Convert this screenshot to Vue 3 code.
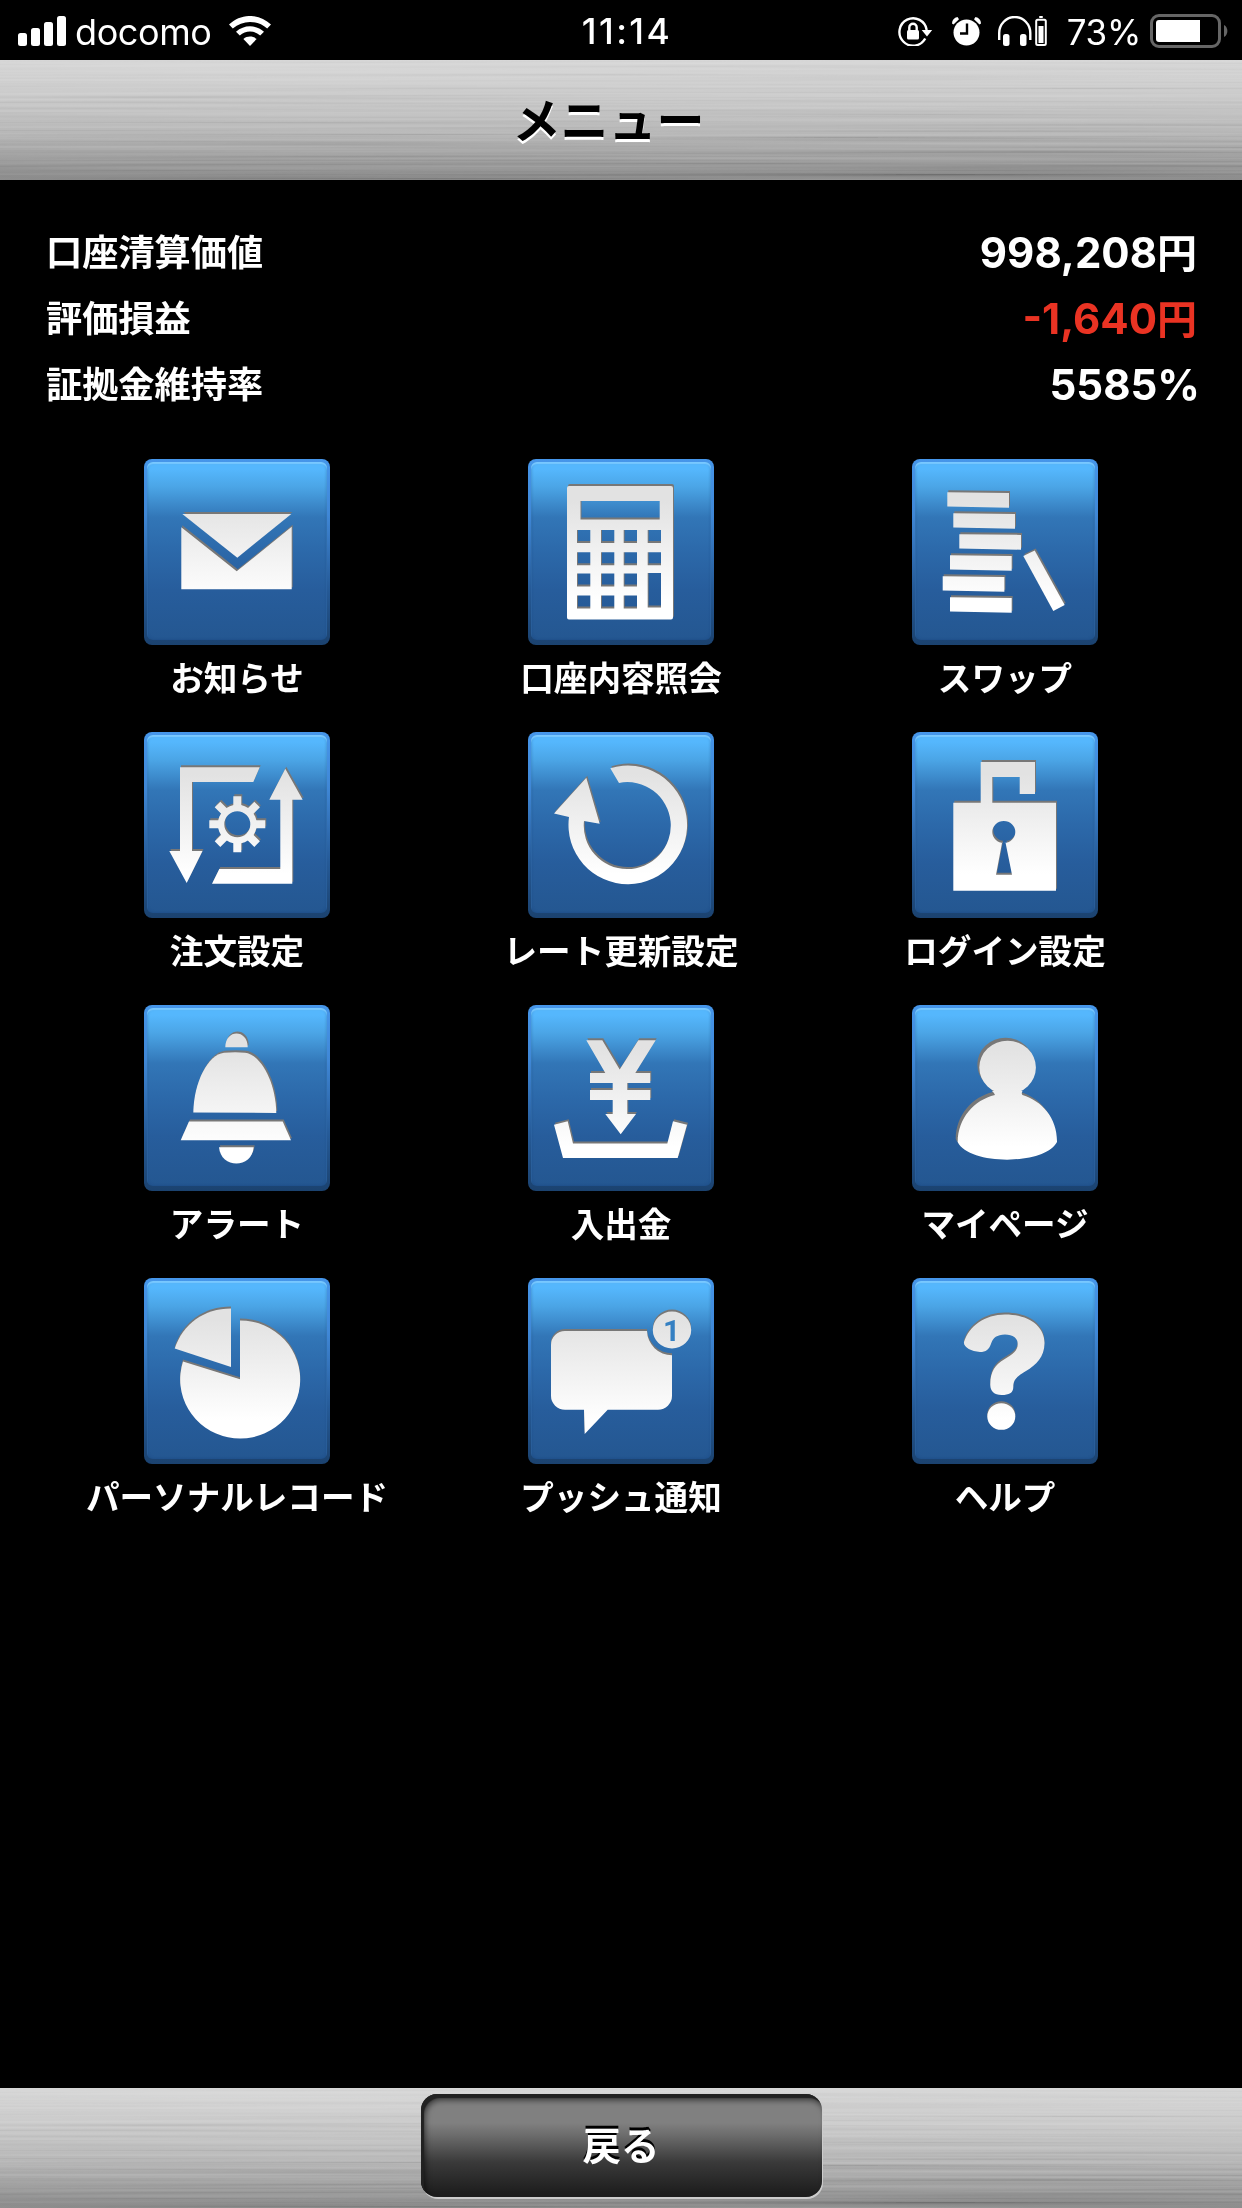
<template>
  <div class="screen">
    <svg class="defs" width="0" height="0">
      <defs>
        <linearGradient id="face" gradientUnits="userSpaceOnUse" x1="0" y1="42" x2="0" y2="142">
          <stop offset="0" stop-color="#e2e2e2" />
          <stop offset="1" stop-color="#ffffff" />
        </linearGradient>
        <filter id="brushed" x="0" y="0" width="100%" height="100%">
          <feTurbulence type="fractalNoise" baseFrequency="0.0016 0.36" numOctaves="2" seed="7" />
          <feColorMatrix
            values="1.6 0 0 0 -0.3
                    1.6 0 0 0 -0.3
                    1.6 0 0 0 -0.3
                    0 0 0 0 1"
          />
        </filter>
      </defs>
    </svg>

    <div class="status">
      <div class="status-left">
        <svg class="signal" width="49" height="30" viewBox="0 0 49 30">
          <rect x="0" y="17" width="9" height="13" rx="2.5" />
          <rect x="13" y="12" width="9" height="18" rx="2.5" />
          <rect x="26" y="6" width="9" height="24" rx="2.5" />
          <rect x="39" y="0" width="9" height="30" rx="2.5" />
        </svg>
        <span class="carrier">docomo</span>
        <svg class="wifi" width="42" height="30" viewBox="0 0 42 30">
          <path d="M0 8.6C12-2.9 30-2.9 42 8.6L38.2 12.4C28.4 3.7 13.6 3.7 3.8 12.4Z" />
          <path d="M7 15.8C15 8.4 27 8.4 35 15.8L31.2 19.6C25.4 14.3 16.6 14.3 10.8 19.6Z" />
          <path d="M14.4 23C18.2 19.8 23.8 19.8 27.6 23L21 30Z" />
        </svg>
      </div>
      <span class="clock">11:14</span>
      <div class="status-right">
        <svg class="rotation" width="35" height="30" viewBox="0 0 35 30">
          <path class="line" d="M27.2 22.5A13.7 13.7 0 1 1 28.7 14" />
          <path d="M23.7 14H34.2L29 20.5Z" />
          <rect x="9" y="14" width="12" height="9.5" rx="1.5" />
          <path class="line" d="M11.3 14.5V11.5a3.7 3.7 0 0 1 7.4 0V14.5" />
        </svg>
        <svg class="alarm" width="29" height="30" viewBox="0 0 29 30">
          <circle cx="14.5" cy="16.5" r="13" />
          <path d="M0 7.5A7 7 0 0 1 5.5 1L7 3.2L1.5 8.5Z" />
          <path d="M29 7.5A7 7 0 0 0 23.5 1L22 3.2L27.5 8.5Z" />
          <path class="hands" d="M15 7.5V17.5H8" />
        </svg>
        <svg class="phones" width="49" height="30" viewBox="0 0 49 30">
          <path class="line" d="M1.2 24V17A15.4 15.8 0 0 1 32.3 17V24" />
          <rect x="5" y="18" width="6.5" height="12" rx="2.5" />
          <rect x="22" y="18" width="6.5" height="12" rx="2.5" />
          <rect x="41" y="0" width="4" height="2" rx="1" />
          <rect class="cell" x="38.2" y="3.7" width="9.6" height="25.3" rx="1.5" />
          <rect x="40.5" y="10" width="5" height="17" />
        </svg>
        <span class="percent">73%</span>
        <svg class="battery" width="79" height="34" viewBox="0 0 79 34">
          <rect class="case" x="1.5" y="1.5" width="68" height="31" rx="7.5" />
          <path class="nub" d="M74 11C78.5 13 78.5 21 74 23Z" />
          <path d="M9 6H50V28H9A3 3 0 0 1 6 25V9A3 3 0 0 1 9 6Z" />
        </svg>
      </div>
    </div>

    <header class="metal header">
      <svg class="grain" width="1242" height="120">
        <rect width="1242" height="120" filter="url(#brushed)" />
      </svg>
      <h1 class="title">メニュー</h1>
    </header>

    <main class="content">
      <dl class="account">
        <div class="account-row" v-for="row in account" :key="row.label">
          <dt>{{ row.label }}</dt>
          <dd :class="{ minus: row.minus, ratio: !row.unit }">
            {{ row.value }}<span v-if="row.unit" class="unit">{{ row.unit }}</span>
          </dd>
        </div>
      </dl>

      <nav class="menu">
        <a class="menu-item" v-for="item in menu" :key="item.label">
          <span class="tile">
            <svg width="186" height="186" viewBox="0 0 186 186">
              <g :class="['shape', item.edge]">
                <path v-for="(d, idx) in item.paths" :key="idx" :d="d" />
              </g>
              <text v-if="item.count" class="count" x="143.5" y="63" text-anchor="middle">
                {{ item.count }}
              </text>
            </svg>
          </span>
          <span class="label">{{ item.label }}</span>
        </a>
      </nav>
    </main>

    <footer class="metal footer">
      <svg class="grain" width="1242" height="120">
        <rect width="1242" height="120" filter="url(#brushed)" />
      </svg>
      <button class="back" type="button">戻る</button>
    </footer>
  </div>
</template>

<script setup>
import { ref } from 'vue'

const account = ref([
  { label: '口座清算価値', value: '998,208', unit: '円' },
  { label: '評価損益', value: '-1,640', unit: '円', minus: true },
  { label: '証拠金維持率', value: '5585%' },
])

const rect = (x, y, w, h) => `M${x} ${y}h${w}v${h}h${-w}Z`
const circle = (cx, cy, rx, ry = rx) =>
  `M${cx - rx} ${cy}a${rx} ${ry} 0 1 0 ${rx * 2} 0a${rx} ${ry} 0 1 0 ${-rx * 2} 0Z`

// ring with eight teeth around it
const gear = (cx, cy) => {
  let teeth = ''
  for (let i = 0; i < 8; i++) {
    const a = (i * Math.PI) / 4
    const at = (r, s) =>
      `${(cx + r * Math.cos(a) - s * Math.sin(a)).toFixed(1)} ${(cy + r * Math.sin(a) + s * Math.cos(a)).toFixed(1)}`
    teeth += `M${at(16, -4)}L${at(28, -4)}L${at(28, 4)}L${at(16, 4)}Z`
  }
  return [circle(cx, cy, 19.5) + circle(cx, cy, 13), teeth]
}

const calculator = () => {
  let d = 'M41 27H143a2 2 0 0 1 2 2V158.6a2 2 0 0 1 -2 2H41a2 2 0 0 1 -2 -2V29a2 2 0 0 1 2 -2Z'
  d += rect(52.5, 42, 79.2, 18.5)
  const xs = [49, 73, 95.7, 119.7]
  const ys = [71, 93.3, 114.6, 136.6]
  ys.forEach((y, r) => {
    xs.forEach((x, c) => {
      if (c === 3 && r > 1) return
      d += rect(x, y, 13.3, 13)
    })
  })
  return d + rect(119.7, 114, 13.3, 34.5)
}

const books = [
  [35.3, 33.2],
  [41.3, 54.2],
  [47.3, 75.2],
  [38, 96.2],
  [30.7, 117.2],
  [38, 138.2],
].map(([x, y]) => `M${x} ${y}l61.7 0.7v14.8l-61.7 -1.3Z`)

const menu = ref([
  {
    label: 'お知らせ',
    paths: [
      'M38.3 55H147.3L93.3 98.7Z',
      'M37.3 68.3L92.7 112.3L147.7 67.7V130.3H37.3Z',
    ],
  },
  { label: '口座内容照会', paths: [calculator()] },
  {
    label: 'スワップ',
    paths: [...books, 'M111.3 96.9L122.7 91.4L152.7 146.1L141.3 152Z'],
  },
  {
    label: '注文設定',
    paths: [
      'M36 35.3H115.7L109.3 50H48V119H58.5L42.7 151L25.3 119H36Z',
      'M141.3 36.7L158.7 67.7H148.3V151.7H68L75.3 137H136.3V67.7H125.3Z',
      ...gear(93.3, 92.3),
    ],
  },
  {
    label: 'レート更新設定',
    paths: [
      'M82.3 36.2A59.3 59.3 0 1 1 41 85L26 81.5L58.3 45.7L71.7 91.8L56 89A43.5 43.5 0 1 0 91 50.9Z',
    ],
  },
  {
    label: 'ログイン設定',
    paths: [
      'M41.3 70.8H68.7V29.9H123V61.9H107.7V45H80.3V70.8H144V158.7H41.3Z' +
        circle(91.8, 100, 11.5, 10.9) +
        'M90 110.9L84 142.7H100L93.6 110.9Z',
    ],
  },
  {
    label: 'アラート',
    paths: [
      'M81.3 42.2C81.3 24 103.7 24 103.7 42.2Z',
      'M49.3 107.4C49.8 77 64 49.5 80 47.7Q92 46.8 101 47.7C117 49.5 131.8 77 132.3 108Z',
      'M45 116.6H138.7L147 135.2H36.7Z',
      'M75 142.3H109.7C108 164 76.7 164 75 142.3Z',
    ],
  },
  {
    label: '入出金',
    paths: [
      'M58.3 35.3H74.3L91.7 64.6L110.3 35.3H127.7L107.3 68H122.3V78H99.3V84.9H122.3V94.9H99.3V109H108L92.7 129.3L77.3 109H84.7V94.9H62V84.9H84.7V78H62V68H77.3Z',
      'M26 119.7L39.7 116.2L45 138.6H139.3L145 116.2L159 119.7L149.7 153H35Z',
    ],
  },
  {
    label: 'マイページ',
    edge: 'edge-left',
    paths: [
      circle(95.6, 62.5, 28.3, 26.8),
      'M80 86H110.5Q109 88.5 110.5 90C130 96 145.3 113 145 137C133 160.5 57 160.5 45.7 137C46 113 62 95 83 90Q82 87.5 80 86Z',
    ],
  },
  {
    label: 'パーソナルレコード',
    edge: 'edge-top',
    paths: [
      'M87 30.6V89.1L30.7 70.5C39 46 60 30.6 87 30.6Z',
      'M96 42.5A60 59 0 1 1 39 83.6L96 101.2Z',
    ],
  },
  {
    label: 'プッシュ通知',
    edge: 'edge-top',
    count: '1',
    paths: [
      'M37 53H119A25 25 0 0 0 144 77.3V117.8a14 14 0 0 1 -14 14H79.7L56.7 156L56 131.8H37a14 14 0 0 1 -14 -14V67a14 14 0 0 1 14 -14Z',
      circle(144, 52, 19.2, 18.5),
    ],
  },
  {
    label: 'ヘルプ',
    edge: 'edge-top',
    paths: [
      'M52 64C57 48 73 36.4 93 36.4C117 36.4 132.5 48 132.5 65C132.5 79 124 87 114 93C104 99 101.3 102 101.3 109C101.3 115 97 117 89.7 117C82 117 78.3 113 78.3 107C78 94 83 87 92 81.5C101 76 105.7 73 105.7 66C105.7 60 101 56.4 93 56.4C85 56.4 81 60 79.5 64.5C77 72 74 74 68 74C59 73.5 51 69 52 64Z',
      circle(89.3, 138.5, 14, 13.3),
    ],
  },
])
</script>

<style>
body {
  background: #000;
}
</style>

<style scoped>
.screen {
  display: flex;
  flex-direction: column;
  width: 1242px;
  height: 2208px;
  overflow: hidden;
  background: #000;
  color: #fff;
  font-family: Inter, 'Noto Sans CJK JP', sans-serif;
}

.defs {
  position: absolute;
}

/* status bar */
.status {
  display: grid;
  grid-template-columns: 1fr auto 1fr;
  align-items: center;
  height: 60px;
  padding: 0 13px 0 18px;
  box-sizing: border-box;
  line-height: 60px;
  font-size: 35px;
}

.status svg {
  flex: none;
  fill: #fff;
}

.status .line,
.status .cell {
  fill: none;
  stroke: #fff;
  stroke-width: 2.4;
}

.status .cell {
  stroke-width: 2;
}

.status-left,
.status-right {
  display: flex;
  align-items: center;
}

.status-right {
  justify-content: flex-end;
}

.carrier {
  margin: 1px 17px 0 8px;
  font-size: 36px;
  letter-spacing: -0.4px;
}

.clock {
  padding-left: 7px;
  margin-top: 2px;
  font-size: 35.5px;
  font-weight: 550;
  letter-spacing: 2.4px;
}

.alarm {
  margin-left: 19px;
}

.status .hands {
  fill: none;
  stroke: #000;
  stroke-width: 2.4;
}

.phones {
  margin-left: 17px;
}

.percent {
  margin: 2px 9px 0 20px;
  letter-spacing: -0.3px;
}

.status .case {
  fill: none;
  stroke: #666;
  stroke-width: 3;
}

.status .nub {
  fill: #666;
}

/* brushed metal bars */
.metal {
  position: relative;
  display: flex;
  justify-content: center;
  flex: none;
  height: 120px;
  background: linear-gradient(#d3d3d3, #c6c6c6 30%, #b0b0b0 62%, #868686 95%, #808080);
}

.grain {
  position: absolute;
  top: 0;
  left: 0;
  mix-blend-mode: overlay;
  opacity: 0.18;
}

.title {
  position: relative;
  margin: 0;
  padding-right: 25px;
  font-size: 48px;
  font-weight: 700;
  line-height: 122px;
  color: #000;
  text-shadow: 0 3px 0 #fff;
}

.content {
  flex: 1;
}

.account {
  margin: 0;
  padding: 40px 45px 0 46px;
}

.account-row {
  display: flex;
  justify-content: space-between;
  height: 66px;
  line-height: 66px;
}

.account dt {
  font-size: 36.2px;
  font-weight: 700;
}

.account dd {
  margin: 0;
  font-size: 42px;
  font-weight: 650;
}

.account .unit {
  font-size: 40px;
}

.account .ratio {
  margin-right: -3px;
}

.account .minus {
  color: #ea3323;
}

.menu {
  display: grid;
  grid-template-columns: repeat(3, 384px);
  grid-auto-rows: 273px;
  justify-content: center;
  margin-top: 41px;
}

.menu-item {
  display: flex;
  flex-direction: column;
  align-items: center;
}

.tile {
  position: relative;
  flex: none;
  width: 186px;
  height: 186px;
  border-radius: 8px;
  background: linear-gradient(#4696ea, #3f87d6 30%, #255a97 70%, #1b426f);
}

.tile::before {
  content: '';
  position: absolute;
  inset: 3px 3px 5px;
  border-radius: 6px;
  background: linear-gradient(#55b7fd 4%, #4ba5e6 14%, #3276b7 31%, #2c69aa 50%, #275d9c 72%, #245791);
  box-shadow: inset 0 2px 1px #78c8ff, inset 0 0 3px rgba(20, 60, 120, 0.5);
}

.tile svg {
  position: relative;
  display: block;
}

.shape {
  fill: url(#face);
  fill-rule: evenodd;
  filter: drop-shadow(1.5px -1.3px 0 #777);
}

.edge-left {
  filter: drop-shadow(-1.5px -2.3px 0 #777);
}

.edge-top {
  filter: drop-shadow(0 -2px 0 #777);
}

.count {
  font: 700 30px Roboto, sans-serif;
  fill: #3580c2;
}

.label {
  margin-top: 9px;
  font-size: 33.6px;
  font-weight: 700;
  line-height: 50px;
  white-space: nowrap;
}

.back {
  position: relative;
  width: 401px;
  height: 103px;
  margin-top: 6px;
  padding: 0;
  border: 0;
  border-radius: 16px;
  background: linear-gradient(#808080 28%, #6c6c6c 40%, #3a3a3a 66%, #1e1e1e 96%);
  box-shadow: inset 3px 4px 1px #222, inset 4px 6px 6px rgba(0, 0, 0, 0.6), 1px 2px 0 #ccc;
  color: #fff;
  font-family: inherit;
  font-size: 38.5px;
  font-weight: 700;
  line-height: 104px;
  text-shadow: 0 -3px 0 #000;
}
</style>
